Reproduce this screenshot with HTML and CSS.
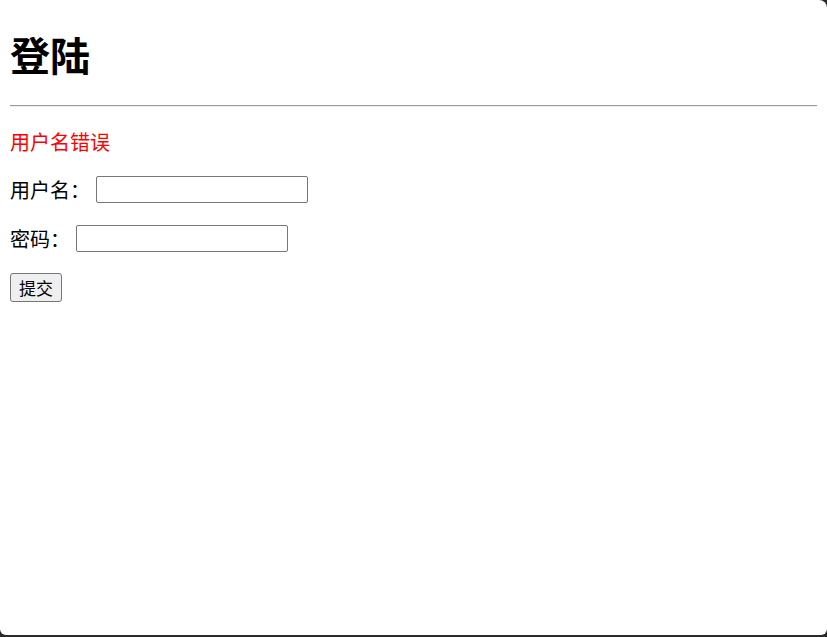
FILE: index.html
```html
<!DOCTYPE html>
<html lang="zh-CN">
<head>
<meta charset="utf-8">
<title>登陆</title>
<link rel="stylesheet" href="styles.css">
</head>
<body>
<div class="window">
  <h1 class="title">登陆</h1>
  <hr class="rule">
  <p class="error">用户名错误</p>
  <form class="form">
    <p class="row row-user"><label class="label" for="u">用户名：</label><input class="field" id="u" type="text"></p>
    <p class="row row-pass"><label class="label" for="p">密码：</label><input class="field" id="p" type="password"></p>
    <button class="submit" type="submit">提交</button>
  </form>
</div>
</body>
</html>
```
FILE: styles.css
```css
html, body {
  margin: 0;
  padding: 0;
  height: 100%;
  background: #2a2a2a;
}
.window {
  box-sizing: border-box;
  height: 635px;
  background: #fff;
  border-radius: 0 8px 6px 6px;
  padding: 10px;
  font-family: "Noto Sans CJK SC", "Microsoft YaHei", sans-serif;
  font-size: 20px;
  line-height: 27px;
  color: #000;
  overflow: hidden;
}
.title {
  font-size: 40px;
  line-height: 48px;
  font-weight: 700;
  margin: 20px 0 0;
}
.rule {
  border: 0;
  border-top: 1px solid #9a9a9a;
  border-bottom: 1px solid #eee;
  margin: 27px 0 0;
  height: 0;
}
.error {
  color: #ff0000;
  margin: 21px 0 0;
}
.form {
  margin: 0;
}
.row {
  margin: 21px 0 0;
  display: flex;
  align-items: center;
}
.row-pass {
  margin-top: 22px;
}
.label {
  display: inline-block;
}
.field {
  box-sizing: border-box;
  width: 212px;
  height: 27px;
  margin-left: 6px;
  border: 1px solid #767676;
  border-radius: 2px;
  padding: 1px 3px;
  font-size: 16px;
}
.submit {
  margin-top: 21px;
  box-sizing: border-box;
  width: 52px;
  height: 29px;
  padding: 0;
  font-family: "Noto Sans CJK SC", "Microsoft YaHei", sans-serif;
  font-size: 17px;
  line-height: 27px;
  background: #efefef;
  border: 1px solid #767676;
  border-radius: 3px;
  color: #000;
}
```
